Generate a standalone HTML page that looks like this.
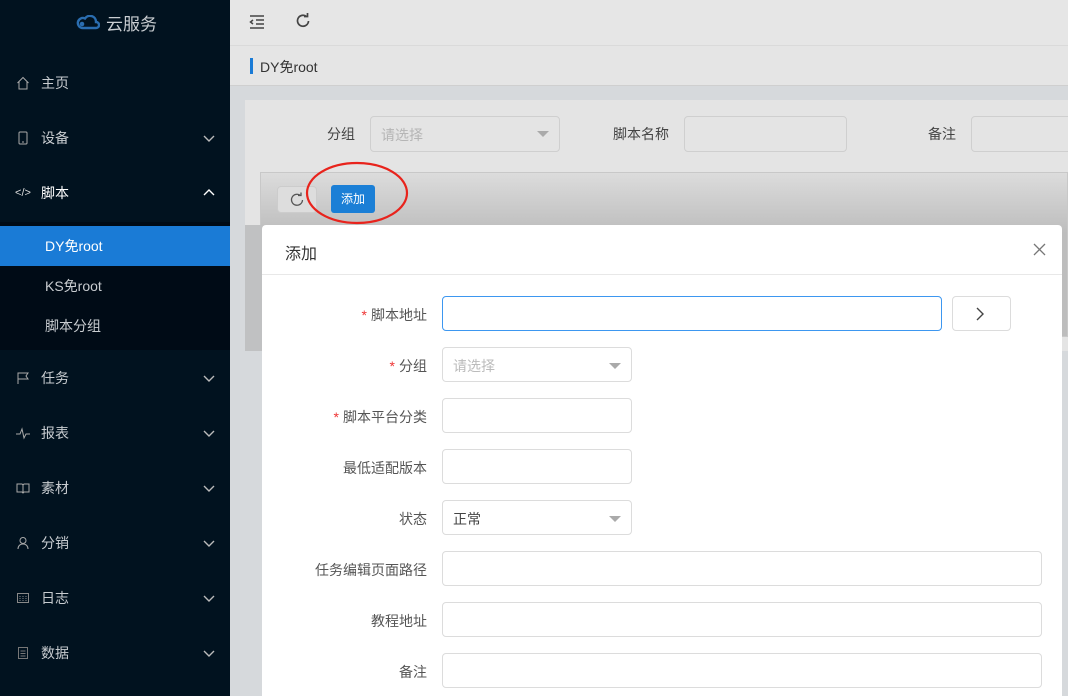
<!DOCTYPE html>
<html><head><meta charset="utf-8"><style>
*{box-sizing:border-box;margin:0;padding:0}
html,body{width:1068px;height:696px;overflow:hidden}
body{position:relative;font-family:"Liberation Sans","Noto Sans CJK SC",sans-serif;font-size:14px;background:#d6d9dc}
.side{position:absolute;left:0;top:0;width:230px;height:696px;background:#01121f;color:#c8ccd0}
.logo{position:absolute;top:10px;left:74px;font-size:17px;color:#c9cdd1;display:flex;align-items:center;gap:6px}
.mi{position:absolute;left:0;width:230px;height:40px;display:flex;align-items:center;padding-left:16px}
.mi .ic{width:14px;height:14px;margin-right:11px;display:flex;align-items:center;justify-content:center}
.mi .ar{position:absolute;right:14px;top:13px}
.sub{position:absolute;left:0;top:222px;width:230px;height:128px;background:#000b16}
.si{position:absolute;left:0;width:230px;height:40px;line-height:40px;padding-left:45px;color:#c8ccd0}
.si.act{background:#1a7bd6;color:#fff}
.hdr{position:absolute;left:230px;top:0;width:838px;height:46px;background:#e6e6e6;border-bottom:1px solid #dadada}
.bc{position:absolute;left:230px;top:46px;width:838px;height:40px;background:#e5e5e5;border-bottom:1px solid #cfcfcf}
.bc span{position:absolute;left:20px;top:12px;width:3px;height:16px;background:#1a7bd6}
.bc b{position:absolute;left:30px;top:11px;font-weight:normal;color:#333;font-size:14px}
.card{position:absolute;left:245px;top:100px;width:823px;height:251px;background:#e4e4e4}
.lbl{position:absolute;color:#444;font-size:14px}
.inp{position:absolute;border:1px solid #cfcfcf;border-radius:4px;background:#e4e4e4}
.tbl{position:absolute;left:260px;top:172px;width:808px;height:165px;background:linear-gradient(#dcdcdc,#bdbdbd 60px,#bdbdbd);border:1px solid #c8c8c8}
.lside{position:absolute;left:245px;top:225px;width:17px;height:126px;background:#c0c1c2}
.dlg{position:absolute;left:262px;top:225px;width:800px;height:480px;background:#fff;border-radius:4px}
.dh{height:50px;border-bottom:1px solid #e8e8e8;padding:15px 23px;font-size:16px;color:#333}
.fl{position:absolute;right:635px;width:200px;text-align:right;color:#555;font-size:14px}
.fl i{color:#e33;font-style:normal;margin-right:4px}
.fi{position:absolute;left:180px;height:35px;border:1px solid #dcdcdc;border-radius:4px;background:#fff;font-size:14px;color:#444;padding:8px 10px}
.tri{position:absolute;right:10px;top:15px;width:0;height:0;border-left:6px solid transparent;border-right:6px solid transparent;border-top:6px solid #aaa}
</style></head><body>
<div class="side">
 <div class="logo"><svg width="26" height="16" viewBox="0 0 26 16"><path d="M9 13a5 5 0 1 1 2-9.5A6 6 0 0 1 22 7a3 3 0 0 1 0 6z" fill="none" stroke="#2a6db0" stroke-width="2.4"/><circle cx="8" cy="9" r="2.3" fill="#2a6db0"/></svg>云服务</div>
 <div class="mi" style="top:63px"><span class="ic"><svg width="14" height="14" viewBox="0 0 14 14" fill="none" stroke="#aaa"><path d="M1.5 7L7 1.5 12.5 7M3 5.5V13h8V5.5"/></svg></span>主页</div>
 <div class="mi" style="top:118px"><span class="ic"><svg width="14" height="14" viewBox="0 0 14 14" fill="none" stroke="#aaa"><rect x="3" y="1" width="8" height="12" rx="1"/><path d="M6 11h2"/></svg></span>设备<svg class="ar" width="14" height="14" viewBox="0 0 14 14" fill="none" stroke="#bbb" stroke-width="1.4"><path d="M2 5l5 5 5-5"/></svg></div>
 <div class="mi" style="top:173px;color:#fff"><span class="ic" style="font-size:11px;color:#ddd">&lt;/&gt;</span>脚本<svg class="ar" width="14" height="14" viewBox="0 0 14 14" fill="none" stroke="#fff" stroke-width="1.4"><path d="M2 9l5-5 5 5"/></svg></div>
 <div class="sub"></div>
 <div class="si act" style="top:226px">DY免root</div>
 <div class="si" style="top:266px">KS免root</div>
 <div class="si" style="top:306px">脚本分组</div>
 <div class="mi" style="top:358px"><span class="ic"><svg width="14" height="14" viewBox="0 0 14 14" fill="none" stroke="#aaa"><path d="M2 13V2h10l-2 3 2 3H2"/></svg></span>任务<svg class="ar" width="14" height="14" viewBox="0 0 14 14" fill="none" stroke="#bbb" stroke-width="1.4"><path d="M2 5l5 5 5-5"/></svg></div>
 <div class="mi" style="top:413px"><span class="ic"><svg width="14" height="14" viewBox="0 0 14 14" fill="none" stroke="#aaa"><path d="M0 8h4l2-5 2 9 2-4h4"/></svg></span>报表<svg class="ar" width="14" height="14" viewBox="0 0 14 14" fill="none" stroke="#bbb" stroke-width="1.4"><path d="M2 5l5 5 5-5"/></svg></div>
 <div class="mi" style="top:468px"><span class="ic"><svg width="14" height="14" viewBox="0 0 14 14" fill="none" stroke="#aaa"><path d="M1 3v8h5l1 1 1-1h5V3H8L7 4 6 3zM7 4v8"/></svg></span>素材<svg class="ar" width="14" height="14" viewBox="0 0 14 14" fill="none" stroke="#bbb" stroke-width="1.4"><path d="M2 5l5 5 5-5"/></svg></div>
 <div class="mi" style="top:523px"><span class="ic"><svg width="14" height="14" viewBox="0 0 14 14" fill="none" stroke="#aaa"><circle cx="7" cy="4.5" r="3"/><path d="M2 13c0-3 2-5 5-5s5 2 5 5"/></svg></span>分销<svg class="ar" width="14" height="14" viewBox="0 0 14 14" fill="none" stroke="#bbb" stroke-width="1.4"><path d="M2 5l5 5 5-5"/></svg></div>
 <div class="mi" style="top:578px"><span class="ic"><svg width="14" height="14" viewBox="0 0 14 14" fill="none" stroke="#888"><rect x="1.5" y="2.5" width="11" height="9"/><path d="M4 5v5M7 5v5M10 5v5" stroke-dasharray="1 1"/></svg></span>日志<svg class="ar" width="14" height="14" viewBox="0 0 14 14" fill="none" stroke="#bbb" stroke-width="1.4"><path d="M2 5l5 5 5-5"/></svg></div>
 <div class="mi" style="top:633px"><span class="ic"><svg width="14" height="14" viewBox="0 0 14 14" fill="none" stroke="#777"><rect x="2.5" y="1.5" width="9" height="11"/><path d="M4.5 5h5M4.5 7.5h5M4.5 10h5"/></svg></span>数据<svg class="ar" width="14" height="14" viewBox="0 0 14 14" fill="none" stroke="#bbb" stroke-width="1.4"><path d="M2 5l5 5 5-5"/></svg></div>
</div>
<div class="hdr">
 <svg style="position:absolute;left:19px;top:14px" width="16" height="16" viewBox="0 0 16 16" fill="none" stroke="#444" stroke-width="1.5"><path d="M1 2h14M7 6h8M7 10h8M1 14h14M4 6L1.5 8 4 10"/></svg>
 <svg style="position:absolute;left:65px;top:13px" width="16" height="16" viewBox="0 0 16 16" fill="none" stroke="#444" stroke-width="1.7"><path d="M13.5 8A5.5 5.5 0 1 1 11.5 3.5"/><path d="M9 3.5h3.5V0" /></svg>
</div>
<div class="bc"><span></span><b>DY免root</b></div>
<div class="card"></div>
<div class="lbl" style="left:327px;top:124px">分组</div>
<div class="inp" style="left:370px;top:116px;width:190px;height:36px"><span style="position:absolute;left:10px;top:8px;color:#b5b5b5">请选择</span><span class="tri" style="top:14px"></span></div>
<div class="lbl" style="left:613px;top:124px">脚本名称</div>
<div class="inp" style="left:684px;top:116px;width:163px;height:36px"></div>
<div class="lbl" style="left:928px;top:124px">备注</div>
<div class="inp" style="left:971px;top:116px;width:110px;height:36px"></div>
<div class="tbl"></div>
<div class="lside"></div>
<div style="position:absolute;left:277px;top:186px;width:40px;height:27px;border:1px solid #ccc;border-radius:4px;background:#ddd"><svg style="position:absolute;left:11px;top:5px" width="16" height="16" viewBox="0 0 16 16" fill="none" stroke="#555" stroke-width="1.3"><path d="M13.5 8A5.5 5.5 0 1 1 11.5 3.5"/><path d="M9 3.5h3V0.5"/></svg></div>
<div style="position:absolute;left:331px;top:185px;width:44px;height:28px;border-radius:3px;background:#1b7fd6;color:#fff;font-size:12px;text-align:center;line-height:28px">添加</div>
<div class="dlg">
 <div class="dh">添加</div>
 <svg style="position:absolute;right:16px;top:18px" width="13" height="13" viewBox="0 0 13 13" stroke="#777" stroke-width="1.3"><path d="M1 1l11 11M12 1L1 12"/></svg>
 <div class="fl" style="top:80px"><i>*</i>脚本地址</div>
 <div class="fi" style="top:71px;width:500px;border-color:#3d97f0"></div>
 <div class="fi" style="top:71px;left:690px;width:59px"><svg style="position:absolute;left:22px;top:10px" width="10" height="14" viewBox="0 0 10 14" fill="none" stroke="#444" stroke-width="1.4"><path d="M2 1l6 6-6 6"/></svg></div>
 <div class="fl" style="top:131px"><i>*</i>分组</div>
 <div class="fi" style="top:122px;width:190px;color:#bbb">请选择<span class="tri"></span></div>
 <div class="fl" style="top:182px"><i>*</i>脚本平台分类</div>
 <div class="fi" style="top:173px;width:190px"></div>
 <div class="fl" style="top:233px">最低适配版本</div>
 <div class="fi" style="top:224px;width:190px"></div>
 <div class="fl" style="top:284px">状态</div>
 <div class="fi" style="top:275px;width:190px">正常<span class="tri"></span></div>
 <div class="fl" style="top:335px">任务编辑页面路径</div>
 <div class="fi" style="top:326px;width:600px"></div>
 <div class="fl" style="top:386px">教程地址</div>
 <div class="fi" style="top:377px;width:600px"></div>
 <div class="fl" style="top:437px">备注</div>
 <div class="fi" style="top:428px;width:600px"></div>
</div>
<svg style="position:absolute;left:304px;top:160px" width="106" height="68"><ellipse cx="53" cy="33" rx="50" ry="30" fill="none" stroke="#e8231c" stroke-width="2.2"/></svg>
</body></html>
